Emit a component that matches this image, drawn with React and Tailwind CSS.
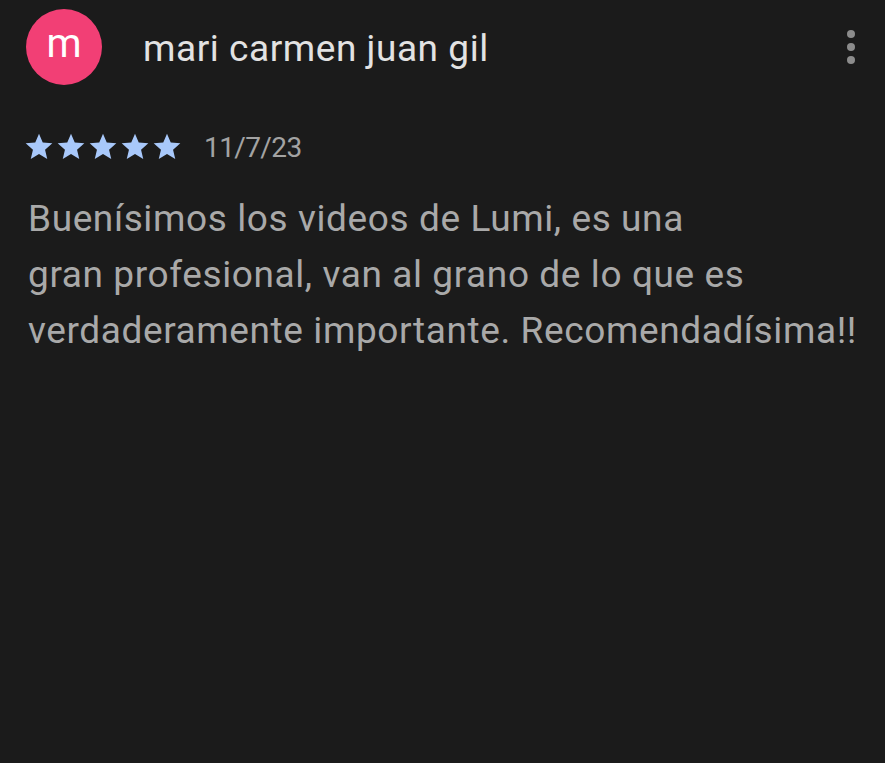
export default function App() {
  return (
    <div className="w-[885px] h-[763px] bg-[#1b1b1b] overflow-hidden" style={{ fontFamily: "Roboto, 'Noto Sans', sans-serif" }}>
      <div className="flex items-start pl-[26px] pr-[30px]">
        <div className="mt-[9px] w-[76px] h-[76px] rounded-full bg-[#f23f75] flex items-center justify-center text-white text-[40px] leading-none pb-[6px]">m</div>
        <div className="mt-[30px] ml-[41px] text-[#e2e2e2] text-[37px] leading-[37px] tracking-[0.55px] flex-1">mari carmen juan gil</div>
        <div className="mt-[30px] flex flex-col gap-[5px]">
          <span className="w-[8px] h-[8px] rounded-full bg-[#8c8c8c]"></span>
          <span className="w-[8px] h-[8px] rounded-full bg-[#8c8c8c]"></span>
          <span className="w-[8px] h-[8px] rounded-full bg-[#8c8c8c]"></span>
        </div>
      </div>
      <div className="flex items-start pl-[23px] mt-[46px]">
        <div className="flex">
          {[0, 1, 2, 3, 4].map((i) => (
            <svg key={i} width="32" height="32" viewBox="0 0 24 24">
              <path fill="#a8c8fa" d="M12 17.27L18.18 21l-1.64-7.03L22 9.24l-7.19-.61L12 2 9.19 8.63 2 9.24l5.46 4.73L5.82 21z" />
            </svg>
          ))}
        </div>
        <div className="mt-[3px] ml-[21px] text-[#a3a3a3] text-[28px] leading-[28px] tracking-[-0.6px]">11/7/23</div>
      </div>
      <div className="pl-[28px] mt-[28px] text-[#a9a9a9] text-[37px] leading-[56px] tracking-[0.6px]">
        Buenísimos los videos de Lumi, es una<br />
        gran profesional, van al grano de lo que es<br />
        verdaderamente importante. Recomendadísima!!
      </div>
    </div>
  );
}
